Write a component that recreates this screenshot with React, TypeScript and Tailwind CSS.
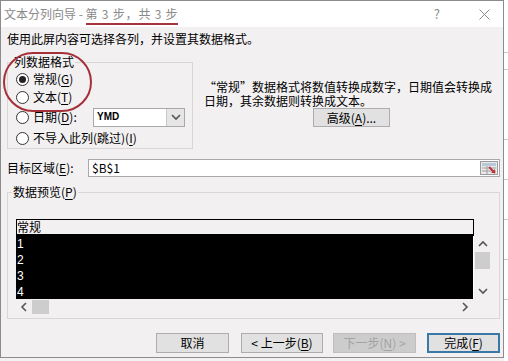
import React from "react";

function Radio({ checked }: { checked?: boolean }) {
  return (
    <span className="w-[13px] h-[13px] rounded-full border border-[#333333] bg-white flex items-center justify-center shrink-0">
      {checked ? <span className="w-[7px] h-[7px] rounded-full bg-[#222222]" /> : null}
    </span>
  );
}

function U({ children }: { children: React.ReactNode }) {
  return <span className="underline underline-offset-[2px]">{children}</span>;
}

function Chevron({ dir, className }: { dir: "up" | "down" | "left" | "right"; className?: string }) {
  const d =
    dir === "up"
      ? "M1 6 L5 2 L9 6"
      : dir === "down"
      ? "M1 2 L5 6 L9 2"
      : dir === "left"
      ? "M6 1 L2 5 L6 9"
      : "M2 1 L6 5 L2 9";
  const w = dir === "up" || dir === "down" ? 10 : 8;
  const h = dir === "up" || dir === "down" ? 8 : 10;
  return (
    <svg width={w} height={h} viewBox={`0 0 ${w} ${h}`} className={className}>
      <path d={d} fill="none" stroke="#555555" strokeWidth="1.6" />
    </svg>
  );
}

export default function App() {
  return (
    <div className="relative w-[508px] h-[361px] flex items-start bg-[#f2f2f2] font-['Noto_Sans_CJK_SC','Liberation_Sans',sans-serif] text-[12px] text-black overflow-hidden">
      <div className="w-[504px] h-[358px] flex flex-col border border-[#8c8c8c] bg-[#f3f0f2] shrink-0">
        {/* Title bar */}
        <div className="h-[26px] bg-white flex items-center pl-[3px] pr-[13px] shrink-0">
          <span className="text-[12px] text-[#8a8a8a] leading-[16px] whitespace-pre">文本分列向导 - </span>
          <span className="text-[12px] text-[#8a8a8a] leading-[16px] tracking-[0.8px] border-b-2 border-[#a8323e] whitespace-pre mt-[3px] pb-[1px]">第 3 步，共 3 步</span>
          <span className="ml-auto text-[13px] text-[#8a8a8a] leading-[16px]">?</span>
          <svg width="11" height="11" viewBox="0 0 11 11" className="ml-[39px]">
            <path d="M0.5 0.5 L10.5 10.5 M10.5 0.5 L0.5 10.5" stroke="#8a8a8a" strokeWidth="1" />
          </svg>
        </div>

        {/* Body */}
        <div className="flex-1 flex flex-col pl-[6px] pr-[3px]">
          <div className="mt-[4px] leading-[15px] whitespace-nowrap">使用此屏内容可选择各列，并设置其数据格式。</div>

          <div className="mt-[9px] flex items-start">
            <fieldset className="w-[186px] h-[94px] border border-[#d9d6d8] pl-[8px] pb-[2px] flex flex-col shrink-0">
              <legend className="ml-[-3px] px-[1px] leading-[14px]">列数据格式</legend>
              <div className="mt-[2px] h-[16px] flex items-center gap-[4px]">
                <Radio checked />
                <span className="leading-[16px]">常规(<U>G</U>)</span>
              </div>
              <div className="mt-[2px] h-[16px] flex items-center gap-[4px]">
                <Radio />
                <span className="leading-[16px]">文本(<U>T</U>)</span>
              </div>
              <div className="mt-[2px] h-[20px] flex items-center">
                <Radio />
                <span className="ml-[4px] leading-[16px] w-[60px]">日期(<U>D</U>):</span>
                <div className="w-[92px] h-[19px] border border-[#a9a9a9] bg-white flex items-center">
                  <span className="pl-[3px] text-[10px] font-bold font-['Liberation_Sans',sans-serif] leading-[12px]">YMD</span>
                  <span className="ml-auto w-[18px] h-full bg-[#e6e6e6] border-l border-[#c8c8c8] flex items-center justify-center">
                    <Chevron dir="down" />
                  </span>
                </div>
              </div>
              <div className="mt-[3px] h-[16px] flex items-center gap-[4px]">
                <Radio />
                <span className="leading-[16px]">不导入此列(跳过)(<U>I</U>)</span>
              </div>
            </fieldset>

            <div className="ml-[11px] mt-[25px] flex flex-col">
              <div className="leading-[14px] whitespace-nowrap">
                “常规”数据格式将数值转换成数字，日期值会转换成
                <br />
                日期，其余数据则转换成文本。
              </div>
              <button className="ml-[109px] mt-[0px] w-[77px] h-[19px] border border-[#adadad] bg-[#e1e1e1] leading-[16px] flex items-center justify-center">
                高级(<U>A</U>)...
              </button>
            </div>
          </div>

          {/* Target */}
          <div className="mt-[10px] h-[18px] flex items-center">
            <span className="w-[81px] leading-[16px] whitespace-nowrap">目标区域(<U>E</U>):</span>
            <div className="flex-1 h-[18px] border border-[#a9a9a9] bg-white flex items-center pl-[3px] pr-[1px]">
              <span className="leading-[14px]">$B$1</span>
              <svg width="18" height="14" viewBox="0 0 18 14" className="ml-auto">
                <rect x="0.5" y="0.5" width="17" height="13" fill="#e9e9e9" stroke="#9a9a9a" />
                <rect x="2" y="2" width="14" height="3" fill="#b9c9d9" />
                <path d="M2 7 H16 M2 10 H16 M7 5 V13" stroke="#a0a0a0" strokeWidth="1" />
                <path d="M9 6 L15 12" stroke="#c0303a" strokeWidth="2" />
                <path d="M15 8 V12 H11 Z" fill="#c0303a" />
              </svg>
            </div>
          </div>

          {/* Data preview */}
          <fieldset className="mt-[8px] h-[134px] border border-[#d9d6d8] pl-[8px] pr-[8px] flex flex-col">
            <legend className="ml-[-4px] px-[1px] leading-[14px]">数据预览(<U>P</U>)</legend>
            <div className="mt-[20px] flex">
              <div className="w-[458px] flex flex-col">
                <div className="h-[17px] border border-black border-b-2 bg-[#f3f0f2] leading-[14px] whitespace-nowrap">常规</div>
                <div className="h-[63px] bg-black border-r border-white text-white font-['Liberation_Sans',sans-serif] text-[12px] overflow-hidden pl-[1px]">
                  <div className="h-[16px] leading-[16px]">1</div>
                  <div className="h-[16px] leading-[16px]">2</div>
                  <div className="h-[16px] leading-[16px]">3</div>
                  <div className="h-[16px] leading-[16px]">4</div>
                </div>
              </div>
              <div className="w-[17px] flex flex-col items-center">
                <div className="h-[17px]" />
                <div className="h-[63px] w-full flex flex-col items-center">
                  <Chevron dir="up" className="mt-[4px]" />
                  <div className="mt-[4px] w-[15px] h-[17px] bg-[#cdcdcd]" />
                  <Chevron dir="down" className="mt-[18px]" />
                </div>
              </div>
            </div>
            <div className="h-[16px] w-[458px] flex items-center">
              <Chevron dir="left" className="ml-[4px]" />
              <div className="ml-[4px] w-[17px] h-[14px] bg-[#cdcdcd]" />
              <Chevron dir="right" className="ml-auto mr-[5px]" />
            </div>
          </fieldset>

          {/* Buttons */}
          <div className="mt-[14px] h-[20px] flex justify-end">
            <button className="w-[73px] h-[20px] border border-[#adadad] bg-[#e1e1e1] flex items-center justify-center leading-[16px]">取消</button>
            <button className="ml-[12px] w-[82px] h-[20px] border border-[#adadad] bg-[#e1e1e1] flex items-center justify-center leading-[16px] whitespace-pre">&lt; 上一步(<U>B</U>)</button>
            <button className="ml-[10px] w-[83px] h-[20px] border border-[#bfbfbf] bg-[#cccccc] text-[#a3a3a3] flex items-center justify-center leading-[16px] whitespace-pre">下一步(<U>N</U>) &gt;</button>
            <button className="ml-[11px] w-[73px] h-[20px] border-2 border-[#3a78a8] bg-[#e1e1e1] flex items-center justify-center leading-[16px]">完成(<U>F</U>)</button>
          </div>
        </div>
      </div>

      {/* Excel sheet behind on the right */}
      <div className="flex-1 h-full bg-white flex flex-col">
        <div className="h-[53px] border-b border-[#c8c8c8]" />
        <div className="h-[17px] border-b border-[#c8c8c8]" />
        <div className="h-[70px] border-b border-[#c8c8c8]" />
        <div className="h-[40px] border-b border-[#c8c8c8]" />
        <div className="h-[40px] border-b border-[#c8c8c8]" />
        <div className="h-[40px] border-b border-[#c8c8c8]" />
        <div className="h-[40px] border-b border-[#c8c8c8]" />
      </div>

      {/* Red annotation ellipse */}
      <div className="absolute left-[3px] top-[52px] w-[89px] h-[60px] rounded-full border-[2.5px] border-[#a5303a]" />
    </div>
  );
}
